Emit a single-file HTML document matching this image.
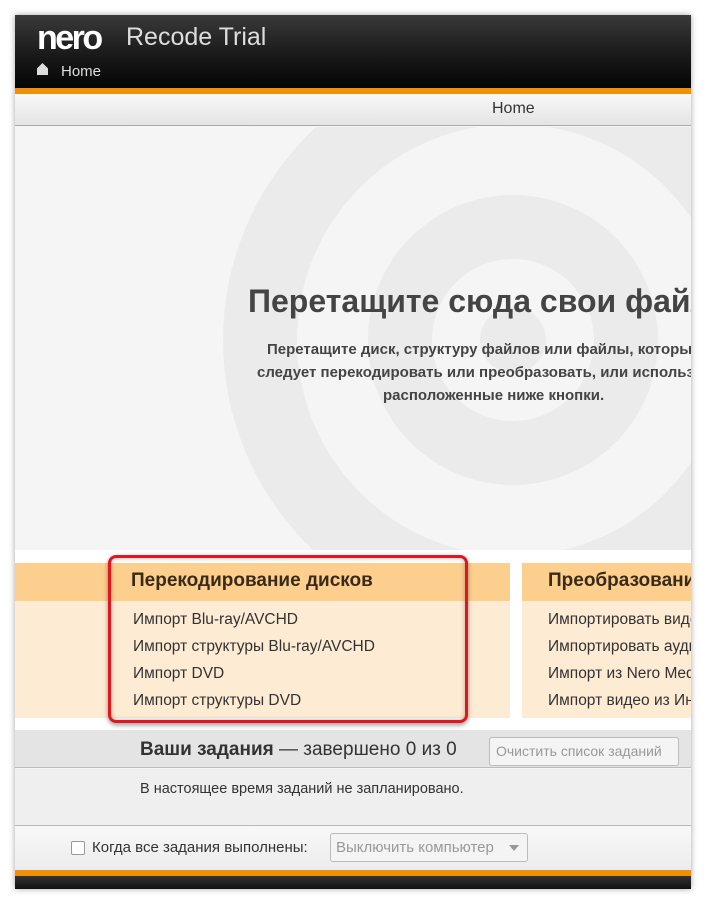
<!DOCTYPE html>
<html><head><meta charset="utf-8"><style>
*{margin:0;padding:0;box-sizing:border-box}
body{width:706px;height:906px;background:#fff;position:relative;overflow:hidden;font-family:"Liberation Sans","DejaVu Sans",sans-serif}
.a{position:absolute}
#win{left:15px;top:15px;width:676px;height:874px;overflow:hidden;box-shadow:0 0 6px rgba(0,0,0,.35);background:#f5f5f5}
.t{white-space:nowrap}
</style></head><body>
<div id="win" class="a">
 <div class="a" style="left:0;top:0;width:676px;height:73px;background:linear-gradient(#3a3a3a,#1c1c1c 50%,#050505)"></div>
 <div class="a t" style="left:22px;top:4px;color:#fff;font-size:34px;font-weight:bold;letter-spacing:-2.5px">nero</div>
 <div class="a t" style="left:111px;top:8px;color:#ddd;font-size:25px">Recode Trial</div>
 <div class="a" style="left:22px;top:48px;width:11px;height:12px;background:#ddd;clip-path:polygon(50% 0,100% 45%,100% 100%,0 100%,0 45%)"></div>
 <div class="a t" style="left:46px;top:48px;color:#ddd;font-size:15px">Home</div>
 <div class="a" style="left:0;top:73px;width:676px;height:6px;background:#f0900a"></div>
 <div class="a" style="left:0;top:79px;width:676px;height:32px;background:linear-gradient(#f8f8f8,#e4e4e4);border-bottom:1px solid #aaa"></div>
 <div class="a t" style="left:477px;top:85px;color:#333;font-size:16px">Home</div>
 <svg class="a" style="left:0;top:112px" width="676" height="423">
  <g transform="translate(498,213)">
   <circle r="290" fill="#ebebeb"/><circle r="216" fill="#f5f5f5"/><circle r="145" fill="#ebebeb"/><circle r="81" fill="#f5f5f5"/><circle r="33" fill="#ebebeb"/>
  </g></svg>
 <div class="a t" style="left:233px;top:268px;color:#444;font-size:32px;font-weight:bold">Перетащите сюда свои файлы</div>
 <div class="a t" style="left:252px;top:326px;color:#444;font-size:15px;font-weight:bold">Перетащите диск, структуру файлов или файлы, которые</div>
 <div class="a t" style="left:242px;top:349px;color:#444;font-size:15px;font-weight:bold">следует перекодировать или преобразовать, или используйте</div>
 <div class="a t" style="left:368px;top:372px;color:#444;font-size:15px;font-weight:bold">расположенные ниже кнопки.</div>
 <div class="a" style="left:0;top:535px;width:676px;height:180px;background:#fff"></div>
 <div class="a" style="left:0;top:548px;width:495px;height:38px;background:#fccf8e"></div>
 <div class="a" style="left:0;top:586px;width:495px;height:117px;background:#fdebd3"></div>
 <div class="a" style="left:507px;top:548px;width:169px;height:38px;background:#fccf8e"></div>
 <div class="a" style="left:507px;top:586px;width:169px;height:117px;background:#fdebd3"></div>
 <div class="a" style="left:93px;top:540px;width:360px;height:168px;border:3px solid #e3161e;border-radius:8px;box-shadow:0 2px 5px rgba(0,0,0,.4),inset 0 0 5px rgba(0,0,0,.3)"></div>
 <div class="a t" style="left:116px;top:555px;color:#3a2a1a;font-size:19px;font-weight:bold">Перекодирование дисков</div>
 <div class="a t" style="left:533px;top:555px;color:#3a2a1a;font-size:19px;font-weight:bold">Преобразование</div>
 <div class="a t" style="left:118px;top:591px;color:#333;font-size:15.5px;line-height:27px">Импорт Blu-ray/AVCHD<br>Импорт структуры Blu-ray/AVCHD<br>Импорт DVD<br>Импорт структуры DVD</div>
 <div class="a t" style="left:533px;top:591px;color:#333;font-size:15.5px;line-height:27px">Импортировать видео<br>Импортировать аудио<br>Импорт из Nero MediaHome<br>Импорт видео из Интернета</div>
 <div class="a" style="left:0;top:715px;width:676px;height:38px;background:#e4e4e4;border-bottom:1px solid #bbb"></div>
 <div class="a t" style="left:125px;top:724px;color:#333;font-size:19px"><b>Ваши задания</b> — завершено 0 из 0</div>
 <div class="a t" style="left:474px;top:722px;width:190px;height:29px;border:1px solid #bbb;border-radius:3px;background:#f4f4f4;color:#999;font-size:14px;padding:5px 6px">Очистить список заданий</div>
 <div class="a" style="left:0;top:754px;width:676px;height:57px;background:#efefef;border-bottom:1px solid #bbb"></div>
 <div class="a t" style="left:125px;top:766px;color:#333;font-size:14.5px">В настоящее время заданий не запланировано.</div>
 <div class="a" style="left:0;top:812px;width:676px;height:43px;background:linear-gradient(#f8f8f8,#ececec)"></div>
 <div class="a" style="left:56px;top:826px;width:14px;height:14px;border:1px solid #999;border-radius:2px;background:#fff"></div>
 <div class="a t" style="left:77px;top:824px;color:#333;font-size:15px">Когда все задания выполнены:</div>
 <div class="a t" style="left:315px;top:818px;width:198px;height:29px;border:1px solid #bbb;border-radius:3px;background:#f4f4f4;color:#999;font-size:15px;padding:5px 5px">Выключить компьютер<span style="position:absolute;right:8px;top:11px;border:5px solid transparent;border-top:6px solid #999"></span></div>
 <div class="a" style="left:0;top:855px;width:676px;height:6px;background:#f0900a"></div>
 <div class="a" style="left:0;top:861px;width:676px;height:13px;background:linear-gradient(#333,#111)"></div>
</div>
</body></html>
